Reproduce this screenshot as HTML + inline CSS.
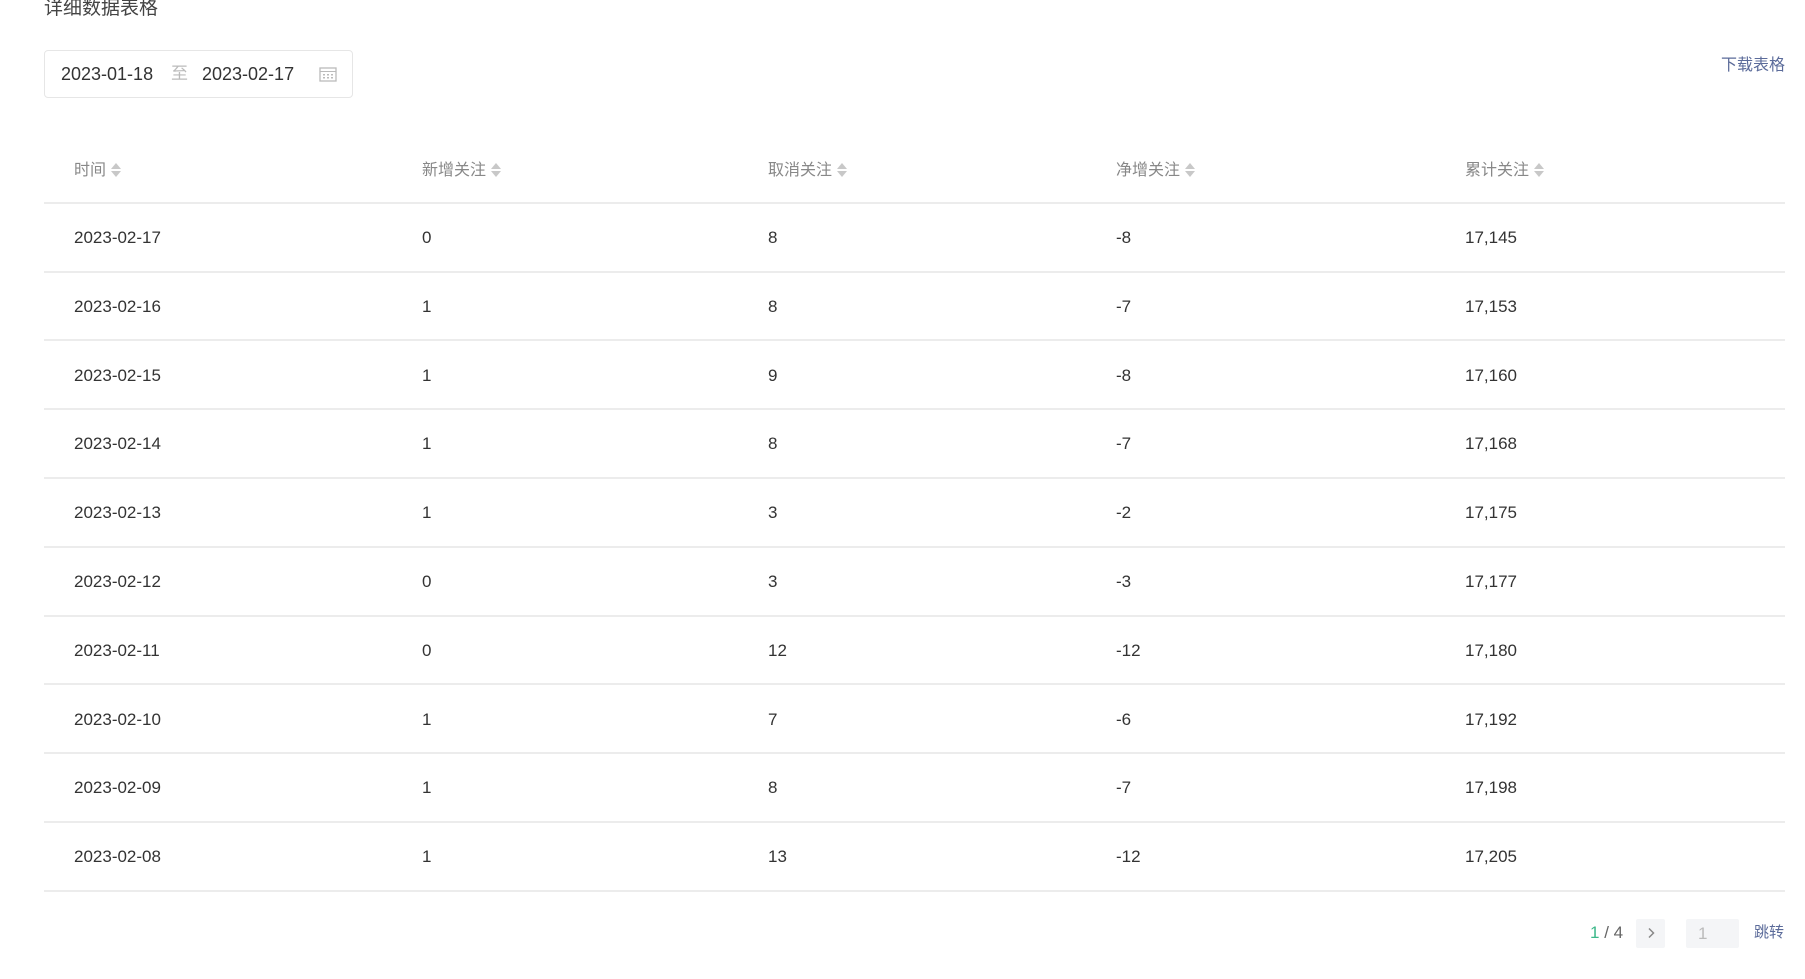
<!DOCTYPE html>
<html><head><meta charset="utf-8"><style>
*{margin:0;padding:0;box-sizing:border-box}
body{width:1805px;height:979px;background:#fff;font-family:"Liberation Sans","Noto Sans CJK SC",sans-serif;position:relative;overflow:hidden;color:#333}
.a{position:absolute;white-space:nowrap}
.title{left:44px;top:-3px;font-size:19px;color:#444;line-height:24px}
.box{left:44px;top:50px;width:309px;height:48px;border:1px solid #e6e6e6;border-radius:4px}
.dl{right:20px;top:51px;font-size:16px;color:#5b6b9a}
.hl{position:absolute;left:44px;width:1741px;height:2px;background:#ececec}
.h{font-size:16px;color:#888;line-height:20px}
.c{font-size:17px;color:#333;line-height:20px}
.s{display:inline-block;vertical-align:middle;margin-left:5px;width:10px;height:16px;position:relative;top:-1px}
.s:before{content:"";position:absolute;left:0;top:1px;border:5px solid transparent;border-top:0;border-bottom:6px solid #c8c8c8}
.s:after{content:"";position:absolute;left:0;top:9px;border:5px solid transparent;border-bottom:0;border-top:6px solid #c8c8c8}
</style></head><body>
<div class="a title">详细数据表格</div>
<div class="a box"></div>
<div class="a" style="left:61px;top:63px;font-size:18px;line-height:22px;color:#333">2023-01-18</div>
<div class="a" style="left:171px;top:63px;font-size:17px;line-height:22px;color:#bbb">至</div>
<div class="a" style="left:202px;top:63px;font-size:18px;line-height:22px;color:#333">2023-02-17</div>
<svg class="a" style="left:319px;top:66px" width="18" height="16" viewBox="0 0 18 16"><rect x="1" y="2" width="16" height="13" fill="none" stroke="#bbb" stroke-width="1.3"/><line x1="1" y1="5.5" x2="17" y2="5.5" stroke="#bbb"/><g fill="#bbb"><rect x="4" y="8" width="2" height="1.5"/><rect x="8" y="8" width="2" height="1.5"/><rect x="12" y="8" width="2" height="1.5"/><rect x="4" y="11" width="2" height="1.5"/><rect x="8" y="11" width="2" height="1.5"/><rect x="12" y="11" width="2" height="1.5"/></g></svg>
<div class="a dl">下载表格</div>

<div class="a h" style="left:74px;top:161px">时间<span class="s"></span></div>
<div class="a h" style="left:422px;top:161px">新增关注<span class="s"></span></div>
<div class="a h" style="left:768px;top:161px">取消关注<span class="s"></span></div>
<div class="a h" style="left:1116px;top:161px">净增关注<span class="s"></span></div>
<div class="a h" style="left:1465px;top:161px">累计关注<span class="s"></span></div>
<div class="hl" style="top:202px"></div>

<div id="rows"></div>
<script>
var d=[["2023-02-17","0","8","-8","17,145"],["2023-02-16","1","8","-7","17,153"],["2023-02-15","1","9","-8","17,160"],["2023-02-14","1","8","-7","17,168"],["2023-02-13","1","3","-2","17,175"],["2023-02-12","0","3","-3","17,177"],["2023-02-11","0","12","-12","17,180"],["2023-02-10","1","7","-6","17,192"],["2023-02-09","1","8","-7","17,198"],["2023-02-08","1","13","-12","17,205"]];
var xs=[74,422,768,1116,1465],h="";
d.forEach(function(r,i){var y=203+i*68.8;
r.forEach(function(v,j){h+='<div class="a c" style="left:'+xs[j]+'px;top:'+(y+25)+'px">'+v+'</div>'});
h+='<div class="hl" style="top:'+(y+67.5)+'px"></div>';});
document.getElementById("rows").innerHTML=h;
</script>

<div class="a" style="left:1590px;top:922px;font-size:17px;line-height:22px;color:#666"><span style="color:#3cb88a">1</span> / 4</div>
<div class="a" style="left:1636px;top:919px;width:29px;height:29px;background:#f4f5f7;border-radius:2px"></div>
<svg class="a" style="left:1646px;top:927px" width="10" height="12" viewBox="0 0 10 12"><path d="M3 1.5 L7.5 6 L3 10.5" fill="none" stroke="#888" stroke-width="1.5"/></svg>
<div class="a" style="left:1686px;top:919px;width:53px;height:29px;background:#f4f5f7;border-radius:2px"></div>
<div class="a" style="left:1698px;top:923px;font-size:17px;line-height:22px;color:#bbb">1</div>
<div class="a" style="left:1754px;top:922px;font-size:15px;line-height:22px;color:#5b6b9a">跳转</div>
</body></html>
